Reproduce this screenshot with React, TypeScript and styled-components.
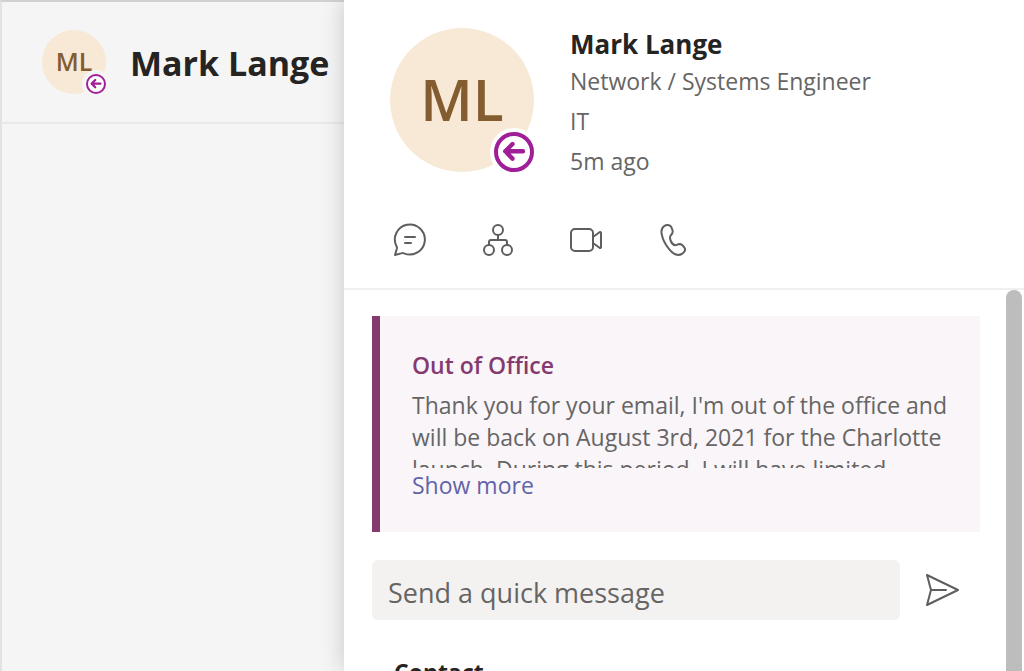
import React from "react";
import styled, { createGlobalStyle } from "styled-components";

const GlobalStyle = createGlobalStyle`
  *, *::before, *::after { box-sizing: border-box; }
  body {
    margin: 0;
    background: #ffffff;
    color: #252423;
    font-family: "Open Sans", "Noto Sans", sans-serif;
  }
  h1, h2, h3, p { margin: 0; }
  button { padding: 0; border: 0; background: none; color: inherit; font: inherit; cursor: pointer; }
`;

const Page = styled.div`
  display: flex;
  height: 100vh;
  overflow: hidden;
`;

const ChatPane = styled.section`
  flex: 0 0 344px;
  border-top: 2px solid #d1d1d1;
  border-left: 2px solid #e3e3e3;
  background: #f5f5f5;
`;

const ChatHeader = styled.header`
  display: flex;
  align-items: center;
  gap: 24px;
  height: 122px;
  padding: 0 0 0 40px;
  border-bottom: 2px solid #e9e9e9;
`;

const ChatTitle = styled.h1`
  padding-top: 2px;
  font-size: 34px;
  line-height: 48px;
  font-weight: 700;
  white-space: nowrap;
`;

const AvatarFrame = styled.div<{ $size: number }>`
  position: relative;
  flex: none;
  display: flex;
  align-items: center;
  justify-content: center;
  width: ${(p) => p.$size}px;
  height: ${(p) => p.$size}px;
  border-radius: 50%;
  background: #f8e9d7;
  color: #835c30;
  font-weight: 600;
`;

const Initials = styled.span<{ $size: number }>`
  padding-bottom: 2px;
  font-size: ${(p) => p.$size}px;
  line-height: 1;
`;

const Presence = styled.svg<{ $size: number }>`
  position: absolute;
  right: -4px;
  bottom: -4px;
  width: ${(p) => p.$size}px;
  height: ${(p) => p.$size}px;
`;

const Card = styled.aside`
  position: relative;
  flex: 1;
  min-width: 0;
  display: flex;
  flex-direction: column;
  background: #ffffff;
  box-shadow: 0 0 22px rgba(0, 0, 0, 0.19);
`;

const CardHeader = styled.header`
  padding: 28px 46px;
  border-bottom: 2px solid #f0f0f0;
`;

const Person = styled.div`
  display: flex;
  gap: 36px;
`;

const PersonText = styled.div`
  flex: 1;
  min-width: 0;
`;

const PersonName = styled.h2`
  margin-bottom: 5px;
  font-size: 26px;
  line-height: 32px;
  font-weight: 700;
`;

const PersonLine = styled.p`
  color: #666564;
  font-size: 23px;
  line-height: 32px;

  & + & {
    margin-top: 8px;
  }
`;

const Actions = styled.div`
  display: flex;
  gap: 48px;
  margin-top: 43px;
`;

const IconButton = styled.button`
  display: flex;
  width: 40px;
  height: 40px;

  svg {
    width: 40px;
    height: 40px;
    fill: none;
    stroke: #5f5e5d;
    stroke-width: 2;
    stroke-linejoin: round;
    stroke-linecap: round;
  }
`;

const CardBody = styled.div`
  flex: 1;
  min-height: 0;
  display: flex;
  padding-right: 2px;
`;

const Content = styled.div`
  flex: 1;
  min-width: 0;
  padding: 26px 26px 0 28px;
  overflow: hidden;
`;

const ScrollThumb = styled.div`
  flex: 0 0 16px;
  border-radius: 8px 8px 0 0;
  background: #bdbdbd;
`;

const Notice = styled.section`
  padding: 33px 32px 31px;
  border-left: 8px solid #853a6f;
  background: #f9f5f9;
  color: #666564;
  font-size: 23px;
  line-height: 32px;
`;

const NoticeTitle = styled.h3`
  margin-bottom: 8px;
  color: #853a6f;
  font-size: 23px;
  line-height: 32px;
  font-weight: 600;
`;

const NoticeText = styled.p`
  height: 79px;
  overflow: hidden;
`;

const ShowMore = styled.button`
  display: block;
  margin-top: 1px;
  color: #6264a7;
`;

const QuickMessage = styled.form`
  display: flex;
  align-items: center;
  gap: 22px;
  margin-top: 28px;
`;

const MessageInput = styled.input`
  flex: 1;
  min-width: 0;
  height: 60px;
  padding: 4px 16px 0;
  border: 0;
  border-radius: 6px;
  background: #f3f2f1;
  color: #252423;
  font: 400 27px "Open Sans", "Noto Sans", sans-serif;

  &::placeholder {
    color: #666564;
    opacity: 1;
  }
`;

const SendButton = styled(IconButton)`
  margin-right: 18px;
`;

const ContactHeading = styled.h3`
  padding: 36px 22px;
  font-size: 23px;
  line-height: 32px;
  font-weight: 700;
`;

type AvatarProps = { size: number; text: number; badge: number; gap: number; ring: string };

function Avatar({ size, text, badge, gap, ring }: AvatarProps) {
  const half = 20 + gap;
  return (
    <AvatarFrame $size={size}>
      <Initials $size={text}>ML</Initials>
      <Presence
        $size={badge}
        viewBox={`${-half} ${-half} ${half * 2} ${half * 2}`}
        role="img"
        aria-label="Out of office"
      >
        <circle r={half} fill={ring} />
        <circle r="18" fill="#fff" stroke="#a01f99" strokeWidth="4" />
        <path
          d="M9 -0.700H-8.500M-1.500 -8L-8.800 -0.700L-1.500 6.600"
          fill="none"
          stroke="#a01f99"
          strokeWidth="4.400"
          strokeLinecap="round"
          strokeLinejoin="round"
        />
      </Presence>
    </AvatarFrame>
  );
}

export default function App() {
  return (
    <>
      <GlobalStyle />
      <Page>
        <ChatPane>
          <ChatHeader>
            <Avatar size={64} text={25} badge={28} gap={8} ring="#f5f5f5" />
            <ChatTitle>Mark Lange</ChatTitle>
          </ChatHeader>
        </ChatPane>
        <Card>
          <CardHeader>
            <Person>
              <Avatar size={144} text={57} badge={48} gap={4} ring="#ffffff" />
              <PersonText>
                <PersonName>Mark Lange</PersonName>
                <PersonLine>Network / Systems Engineer</PersonLine>
                <PersonLine>IT</PersonLine>
                <PersonLine>5m ago</PersonLine>
              </PersonText>
            </Person>
            <Actions>
              <IconButton type="button" aria-label="Chat">
                <svg viewBox="0 0 40 40">
                  <path d="M5 35L6.900 28.500Q7.100 27.600 6.600 26.500A15 15 0 1 1 14 33.300Q13 32.800 12 33.100Z" />
                  <path d="M15 17H25M15 23H21" />
                </svg>
              </IconButton>
              <IconButton type="button" aria-label="Organization">
                <svg viewBox="0 0 40 40">
                  <circle cx="20" cy="10" r="5" />
                  <circle cx="11" cy="30" r="5" />
                  <circle cx="29" cy="30" r="5" />
                  <path d="M20 15V20M11 25V22Q11 20 13 20H27Q29 20 29 22V25" />
                </svg>
              </IconButton>
              <IconButton type="button" aria-label="Video call">
                <svg viewBox="0 0 40 40">
                  <rect x="5" y="9" width="22" height="22" rx="4" />
                  <path d="M27 17L33.500 12.200Q35 11.500 35 13V27Q35 28.500 33.500 27.800L27 23" />
                </svg>
              </IconButton>
              <IconButton type="button" aria-label="Call">
                <svg viewBox="0 0 40 40">
                  <path d="M10 6.200C12 4.600 16 4.200 17.300 7L18.500 10.200C19.200 12.500 18.500 13.700 16.900 15.200C15.300 17 15.800 18.500 16.800 21C18 23.700 19.500 25.500 21.800 25.100L24.500 24.300C26.500 23.800 27.700 24.200 28.900 25.700L30.500 27.800C32.200 30.300 30 32.600 27.800 34C24 36 19.500 34.300 15.500 29.700C11.500 25 8.500 19 7.600 13.700C7.100 10.500 7.800 7.900 10 6.200Z" />
                </svg>
              </IconButton>
            </Actions>
          </CardHeader>
          <CardBody>
            <Content>
              <Notice>
                <NoticeTitle>Out of Office</NoticeTitle>
                <NoticeText>
                  Thank you for your email, I'm out of the office and will be back on August 3rd, 2021 for the Charlotte
                  launch. During this period, I will have limited
                </NoticeText>
                <ShowMore type="button">Show more</ShowMore>
              </Notice>
              <QuickMessage>
                <MessageInput type="text" aria-label="Send a quick message" placeholder="Send a quick message" />
                <SendButton type="button" aria-label="Send">
                  <svg viewBox="0 0 40 40">
                    <path d="M5 5L36 20L5 35L9 20ZM9 20H24" />
                  </svg>
                </SendButton>
              </QuickMessage>
              <ContactHeading>Contact</ContactHeading>
            </Content>
            <ScrollThumb />
          </CardBody>
        </Card>
      </Page>
    </>
  );
}
